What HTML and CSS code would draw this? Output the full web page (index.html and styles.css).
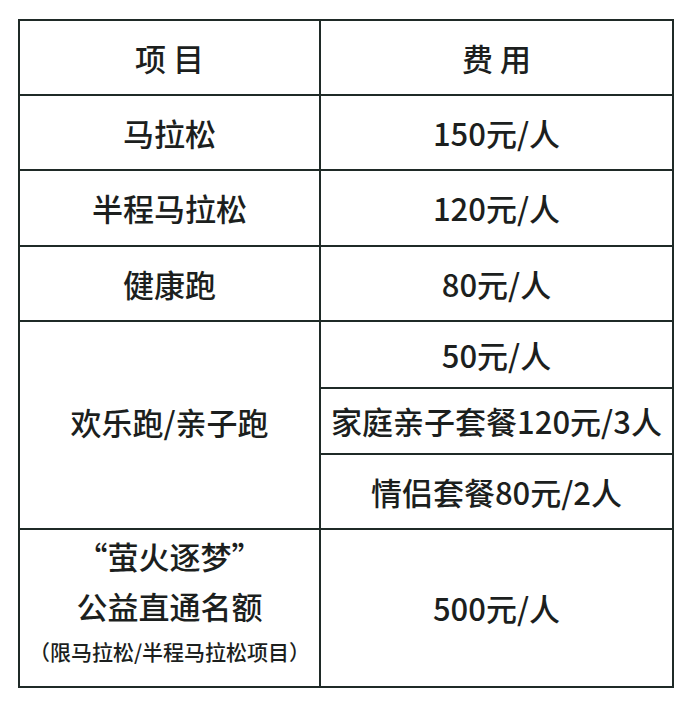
FILE: index.html
```html
<!DOCTYPE html>
<html lang="zh-CN">
<head>
<meta charset="utf-8">
<link rel="stylesheet" href="styles.css">
</head>
<body>
<table class="fees">
  <colgroup><col class="col-item"><col class="col-fee"></colgroup>
  <tr class="h-head"><th>项 目</th><th>费 用</th></tr>
  <tr class="h-75"><td>马拉松</td><td>150元/人</td></tr>
  <tr class="h-76"><td>半程马拉松</td><td>120元/人</td></tr>
  <tr class="h-75"><td>健康跑</td><td>80元/人</td></tr>
  <tr class="h-67"><td rowspan="3"><span class="lift">欢乐跑/亲子跑</span></td><td>50元/人</td></tr>
  <tr class="h-66"><td>家庭亲子套餐120元/3人</td></tr>
  <tr class="h-75"><td>情侣套餐80元/2人</td></tr>
  <tr class="h-last">
    <td>
      <div class="line1">“萤火逐梦”</div>
      <div class="line2">公益直通名额</div>
      <div class="note">（限马拉松/半程马拉松项目）</div>
    </td>
    <td>500元/人</td>
  </tr>
</table>
</body>
</html>
```
FILE: styles.css
```css
html, body {
  margin: 0;
  padding: 0;
  background: #ffffff;
}
body {
  padding: 19px 0 0 18px;
  font-family: "Noto Sans CJK SC", "Noto Sans", sans-serif;
  color: #1c1f1e;
}
.fees {
  border-collapse: collapse;
  width: 656px;
  table-layout: fixed;
}
.col-item { width: 301px; }
.fees th, .fees td {
  border: 2px solid #1f2a27;
  padding: 0;
  text-align: center;
  vertical-align: middle;
  font-size: 31px;
  font-weight: 500;
  line-height: 1.2;
}
.fees th {
  font-weight: 500;
}
.lift {
  display: inline-block;
  margin-bottom: 6px;
}
.h-head { height: 75px; }
.h-75 { height: 75px; }
.h-76 { height: 76px; }
.h-67 { height: 67px; }
.h-66 { height: 66px; }
.h-last { height: 158px; }
.line1, .line2 {
  line-height: 50px;
}
.note {
  font-size: 21px;
  line-height: 40px;
  margin-bottom: 14px;
}
```
